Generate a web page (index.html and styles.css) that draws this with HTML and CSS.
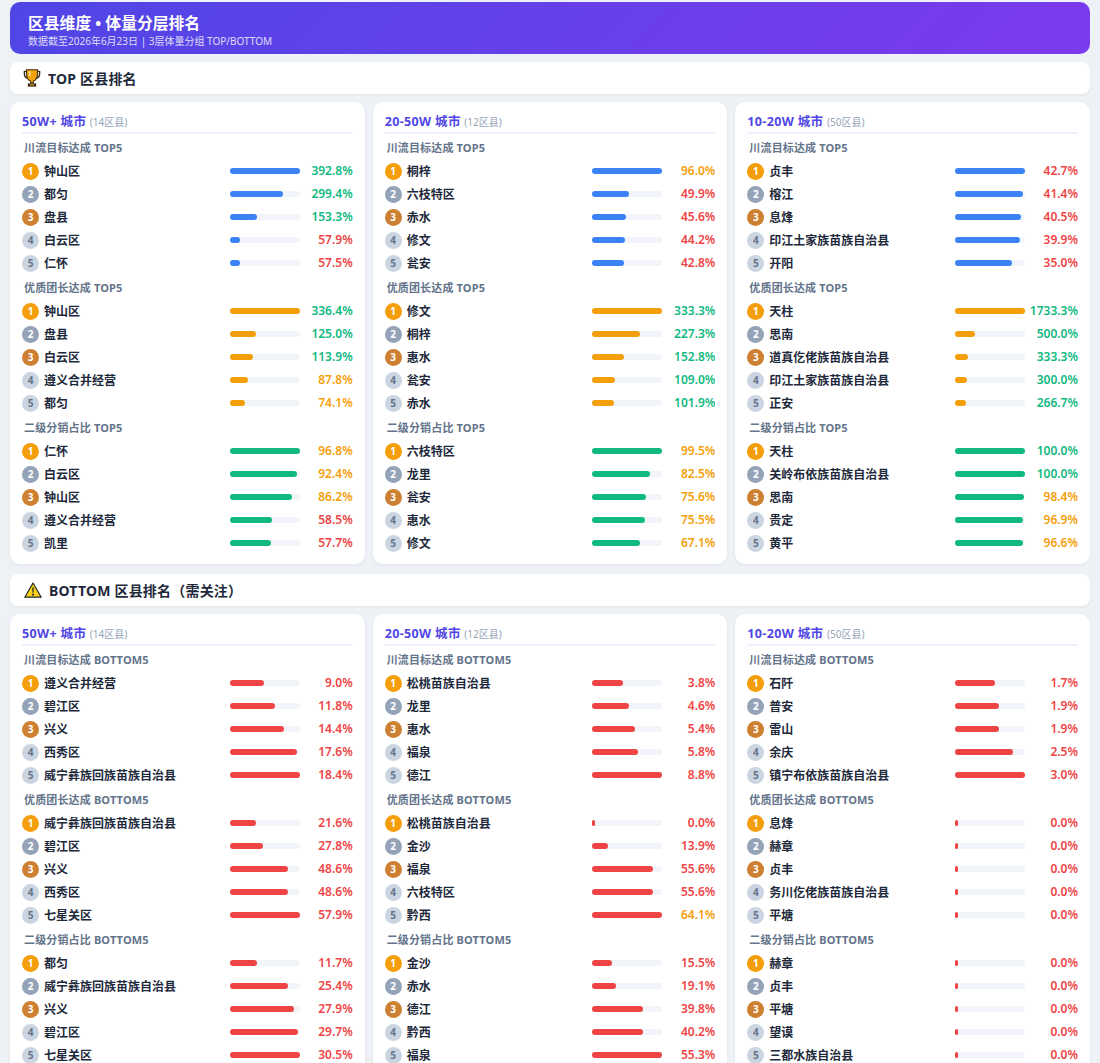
FILE: index.html
```html
<!DOCTYPE html>
<html lang="zh-CN">
<head>
    <meta charset="UTF-8">
    <title>区县维度 • 体量分层排名</title>
    <link rel="stylesheet" href="styles.css">
</head>
<body>
    <header class="banner">
        <h1>区县维度 • 体量分层排名</h1>
        <p>数据截至2026年6月23日 | 3层体量分组 TOP/BOTTOM</p>
    </header>

    <h2 class="section-title">
        <svg class="section-icon" viewBox="0 0 18 19"><path d="M4 2.500H1v2.700c0 2.600 1.700 4.300 4.200 4.500M14 2.500h3v2.700c0 2.600-1.700 4.300-4.200 4.500" fill="none" stroke="#3a2a10" stroke-width="1.500"/><path d="M3.300 .8h11.400v4.700c0 4-2.300 6.500-4.200 7.200v2H7.500v-2C5.600 12 3.300 9.500 3.300 5.500z" fill="#f5a30b" stroke="#3a2a10" stroke-width="1.100"/><path d="M5.600 2.200h1.700v5.300H5.600z" fill="#fde68a"/><path d="M4.600 15.200h8.800V18.600H4.600z" fill="#2b2116"/><path d="M6.500 16.200h5v1.200h-5z" fill="#f5a30b"/></svg>
        TOP 区县排名
    </h2>
    <div class="card-grid">
        <section class="card">
            <h3 class="card-title">50W+ 城市 <small>(14区县)</small></h3>
            <div class="metric">
                <h4>川流目标达成 TOP5</h4>
                <div class="row"><i class="rank r1">1</i><span class="name">钟山区</span><div class="track"><div class="bar blue" style="width:100%"></div></div><b class="val good">392.8%</b></div>
                <div class="row"><i class="rank r2">2</i><span class="name">都匀</span><div class="track"><div class="bar blue" style="width:76.2%"></div></div><b class="val good">299.4%</b></div>
                <div class="row"><i class="rank r3">3</i><span class="name">盘县</span><div class="track"><div class="bar blue" style="width:39%"></div></div><b class="val good">153.3%</b></div>
                <div class="row"><i class="rank">4</i><span class="name">白云区</span><div class="track"><div class="bar blue" style="width:14.7%"></div></div><b class="val bad">57.9%</b></div>
                <div class="row"><i class="rank">5</i><span class="name">仁怀</span><div class="track"><div class="bar blue" style="width:14.6%"></div></div><b class="val bad">57.5%</b></div>
            </div>
            <div class="metric">
                <h4>优质团长达成 TOP5</h4>
                <div class="row"><i class="rank r1">1</i><span class="name">钟山区</span><div class="track"><div class="bar amber" style="width:100%"></div></div><b class="val good">336.4%</b></div>
                <div class="row"><i class="rank r2">2</i><span class="name">盘县</span><div class="track"><div class="bar amber" style="width:37.2%"></div></div><b class="val good">125.0%</b></div>
                <div class="row"><i class="rank r3">3</i><span class="name">白云区</span><div class="track"><div class="bar amber" style="width:33.9%"></div></div><b class="val good">113.9%</b></div>
                <div class="row"><i class="rank">4</i><span class="name">遵义合并经营</span><div class="track"><div class="bar amber" style="width:26.1%"></div></div><b class="val mid">87.8%</b></div>
                <div class="row"><i class="rank">5</i><span class="name">都匀</span><div class="track"><div class="bar amber" style="width:22%"></div></div><b class="val mid">74.1%</b></div>
            </div>
            <div class="metric">
                <h4>二级分销占比 TOP5</h4>
                <div class="row"><i class="rank r1">1</i><span class="name">仁怀</span><div class="track"><div class="bar green" style="width:100%"></div></div><b class="val mid">96.8%</b></div>
                <div class="row"><i class="rank r2">2</i><span class="name">白云区</span><div class="track"><div class="bar green" style="width:95.5%"></div></div><b class="val mid">92.4%</b></div>
                <div class="row"><i class="rank r3">3</i><span class="name">钟山区</span><div class="track"><div class="bar green" style="width:89%"></div></div><b class="val mid">86.2%</b></div>
                <div class="row"><i class="rank">4</i><span class="name">遵义合并经营</span><div class="track"><div class="bar green" style="width:60.4%"></div></div><b class="val bad">58.5%</b></div>
                <div class="row"><i class="rank">5</i><span class="name">凯里</span><div class="track"><div class="bar green" style="width:59.6%"></div></div><b class="val bad">57.7%</b></div>
            </div>
        </section>

        <section class="card">
            <h3 class="card-title">20-50W 城市 <small>(12区县)</small></h3>
            <div class="metric">
                <h4>川流目标达成 TOP5</h4>
                <div class="row"><i class="rank r1">1</i><span class="name">桐梓</span><div class="track"><div class="bar blue" style="width:100%"></div></div><b class="val mid">96.0%</b></div>
                <div class="row"><i class="rank r2">2</i><span class="name">六枝特区</span><div class="track"><div class="bar blue" style="width:52%"></div></div><b class="val bad">49.9%</b></div>
                <div class="row"><i class="rank r3">3</i><span class="name">赤水</span><div class="track"><div class="bar blue" style="width:47.5%"></div></div><b class="val bad">45.6%</b></div>
                <div class="row"><i class="rank">4</i><span class="name">修文</span><div class="track"><div class="bar blue" style="width:46%"></div></div><b class="val bad">44.2%</b></div>
                <div class="row"><i class="rank">5</i><span class="name">瓮安</span><div class="track"><div class="bar blue" style="width:44.6%"></div></div><b class="val bad">42.8%</b></div>
            </div>
            <div class="metric">
                <h4>优质团长达成 TOP5</h4>
                <div class="row"><i class="rank r1">1</i><span class="name">修文</span><div class="track"><div class="bar amber" style="width:100%"></div></div><b class="val good">333.3%</b></div>
                <div class="row"><i class="rank r2">2</i><span class="name">桐梓</span><div class="track"><div class="bar amber" style="width:68.2%"></div></div><b class="val good">227.3%</b></div>
                <div class="row"><i class="rank r3">3</i><span class="name">惠水</span><div class="track"><div class="bar amber" style="width:45.8%"></div></div><b class="val good">152.8%</b></div>
                <div class="row"><i class="rank">4</i><span class="name">瓮安</span><div class="track"><div class="bar amber" style="width:32.7%"></div></div><b class="val good">109.0%</b></div>
                <div class="row"><i class="rank">5</i><span class="name">赤水</span><div class="track"><div class="bar amber" style="width:30.6%"></div></div><b class="val good">101.9%</b></div>
            </div>
            <div class="metric">
                <h4>二级分销占比 TOP5</h4>
                <div class="row"><i class="rank r1">1</i><span class="name">六枝特区</span><div class="track"><div class="bar green" style="width:100%"></div></div><b class="val mid">99.5%</b></div>
                <div class="row"><i class="rank r2">2</i><span class="name">龙里</span><div class="track"><div class="bar green" style="width:82.9%"></div></div><b class="val mid">82.5%</b></div>
                <div class="row"><i class="rank r3">3</i><span class="name">瓮安</span><div class="track"><div class="bar green" style="width:76%"></div></div><b class="val mid">75.6%</b></div>
                <div class="row"><i class="rank">4</i><span class="name">惠水</span><div class="track"><div class="bar green" style="width:75.9%"></div></div><b class="val mid">75.5%</b></div>
                <div class="row"><i class="rank">5</i><span class="name">修文</span><div class="track"><div class="bar green" style="width:67.4%"></div></div><b class="val mid">67.1%</b></div>
            </div>
        </section>

        <section class="card">
            <h3 class="card-title">10-20W 城市 <small>(50区县)</small></h3>
            <div class="metric">
                <h4>川流目标达成 TOP5</h4>
                <div class="row"><i class="rank r1">1</i><span class="name">贞丰</span><div class="track"><div class="bar blue" style="width:100%"></div></div><b class="val bad">42.7%</b></div>
                <div class="row"><i class="rank r2">2</i><span class="name">榕江</span><div class="track"><div class="bar blue" style="width:97%"></div></div><b class="val bad">41.4%</b></div>
                <div class="row"><i class="rank r3">3</i><span class="name">息烽</span><div class="track"><div class="bar blue" style="width:94.8%"></div></div><b class="val bad">40.5%</b></div>
                <div class="row"><i class="rank">4</i><span class="name">印江土家族苗族自治县</span><div class="track"><div class="bar blue" style="width:93.4%"></div></div><b class="val bad">39.9%</b></div>
                <div class="row"><i class="rank">5</i><span class="name">开阳</span><div class="track"><div class="bar blue" style="width:82%"></div></div><b class="val bad">35.0%</b></div>
            </div>
            <div class="metric">
                <h4>优质团长达成 TOP5</h4>
                <div class="row"><i class="rank r1">1</i><span class="name">天柱</span><div class="track"><div class="bar amber" style="width:100%"></div></div><b class="val good">1733.3%</b></div>
                <div class="row"><i class="rank r2">2</i><span class="name">思南</span><div class="track"><div class="bar amber" style="width:28.8%"></div></div><b class="val good">500.0%</b></div>
                <div class="row"><i class="rank r3">3</i><span class="name">道真仡佬族苗族自治县</span><div class="track"><div class="bar amber" style="width:19.2%"></div></div><b class="val good">333.3%</b></div>
                <div class="row"><i class="rank">4</i><span class="name">印江土家族苗族自治县</span><div class="track"><div class="bar amber" style="width:17.3%"></div></div><b class="val good">300.0%</b></div>
                <div class="row"><i class="rank">5</i><span class="name">正安</span><div class="track"><div class="bar amber" style="width:15.4%"></div></div><b class="val good">266.7%</b></div>
            </div>
            <div class="metric">
                <h4>二级分销占比 TOP5</h4>
                <div class="row"><i class="rank r1">1</i><span class="name">天柱</span><div class="track"><div class="bar green" style="width:100%"></div></div><b class="val good">100.0%</b></div>
                <div class="row"><i class="rank r2">2</i><span class="name">关岭布依族苗族自治县</span><div class="track"><div class="bar green" style="width:100%"></div></div><b class="val good">100.0%</b></div>
                <div class="row"><i class="rank r3">3</i><span class="name">思南</span><div class="track"><div class="bar green" style="width:98.4%"></div></div><b class="val mid">98.4%</b></div>
                <div class="row"><i class="rank">4</i><span class="name">贵定</span><div class="track"><div class="bar green" style="width:96.9%"></div></div><b class="val mid">96.9%</b></div>
                <div class="row"><i class="rank">5</i><span class="name">黄平</span><div class="track"><div class="bar green" style="width:96.6%"></div></div><b class="val mid">96.6%</b></div>
            </div>
        </section>
    </div>

    <h2 class="section-title section-bottom">
        <svg class="section-icon warn-icon" viewBox="0 0 18 16"><path d="M9 1l8.200 14.200H.8z" fill="#fcd116" stroke="#1f2933" stroke-width="1.200" stroke-linejoin="round"/><path d="M8.200 5.500h1.600l-.3 5.300h-1z" fill="#1f2933"/><path d="M8.100 11.700h1.800v1.700H8.100z" fill="#1f2933"/></svg>
        BOTTOM 区县排名（需关注）
    </h2>
    <div class="card-grid">
        <section class="card">
            <h3 class="card-title">50W+ 城市 <small>(14区县)</small></h3>
            <div class="metric">
                <h4>川流目标达成 BOTTOM5</h4>
                <div class="row"><i class="rank r1">1</i><span class="name">遵义合并经营</span><div class="track"><div class="bar red" style="width:48.9%"></div></div><b class="val bad">9.0%</b></div>
                <div class="row"><i class="rank r2">2</i><span class="name">碧江区</span><div class="track"><div class="bar red" style="width:64.1%"></div></div><b class="val bad">11.8%</b></div>
                <div class="row"><i class="rank r3">3</i><span class="name">兴义</span><div class="track"><div class="bar red" style="width:78.3%"></div></div><b class="val bad">14.4%</b></div>
                <div class="row"><i class="rank">4</i><span class="name">西秀区</span><div class="track"><div class="bar red" style="width:95.7%"></div></div><b class="val bad">17.6%</b></div>
                <div class="row"><i class="rank">5</i><span class="name">威宁彝族回族苗族自治县</span><div class="track"><div class="bar red" style="width:100%"></div></div><b class="val bad">18.4%</b></div>
            </div>
            <div class="metric">
                <h4>优质团长达成 BOTTOM5</h4>
                <div class="row"><i class="rank r1">1</i><span class="name">威宁彝族回族苗族自治县</span><div class="track"><div class="bar red" style="width:37.3%"></div></div><b class="val bad">21.6%</b></div>
                <div class="row"><i class="rank r2">2</i><span class="name">碧江区</span><div class="track"><div class="bar red" style="width:48%"></div></div><b class="val bad">27.8%</b></div>
                <div class="row"><i class="rank r3">3</i><span class="name">兴义</span><div class="track"><div class="bar red" style="width:83.9%"></div></div><b class="val bad">48.6%</b></div>
                <div class="row"><i class="rank">4</i><span class="name">西秀区</span><div class="track"><div class="bar red" style="width:83.9%"></div></div><b class="val bad">48.6%</b></div>
                <div class="row"><i class="rank">5</i><span class="name">七星关区</span><div class="track"><div class="bar red" style="width:100%"></div></div><b class="val bad">57.9%</b></div>
            </div>
            <div class="metric">
                <h4>二级分销占比 BOTTOM5</h4>
                <div class="row"><i class="rank r1">1</i><span class="name">都匀</span><div class="track"><div class="bar red" style="width:38.4%"></div></div><b class="val bad">11.7%</b></div>
                <div class="row"><i class="rank r2">2</i><span class="name">威宁彝族回族苗族自治县</span><div class="track"><div class="bar red" style="width:83.3%"></div></div><b class="val bad">25.4%</b></div>
                <div class="row"><i class="rank r3">3</i><span class="name">兴义</span><div class="track"><div class="bar red" style="width:91.5%"></div></div><b class="val bad">27.9%</b></div>
                <div class="row"><i class="rank">4</i><span class="name">碧江区</span><div class="track"><div class="bar red" style="width:97.4%"></div></div><b class="val bad">29.7%</b></div>
                <div class="row"><i class="rank">5</i><span class="name">七星关区</span><div class="track"><div class="bar red" style="width:100%"></div></div><b class="val bad">30.5%</b></div>
            </div>
        </section>

        <section class="card">
            <h3 class="card-title">20-50W 城市 <small>(12区县)</small></h3>
            <div class="metric">
                <h4>川流目标达成 BOTTOM5</h4>
                <div class="row"><i class="rank r1">1</i><span class="name">松桃苗族自治县</span><div class="track"><div class="bar red" style="width:43.2%"></div></div><b class="val bad">3.8%</b></div>
                <div class="row"><i class="rank r2">2</i><span class="name">龙里</span><div class="track"><div class="bar red" style="width:52.3%"></div></div><b class="val bad">4.6%</b></div>
                <div class="row"><i class="rank r3">3</i><span class="name">惠水</span><div class="track"><div class="bar red" style="width:61.4%"></div></div><b class="val bad">5.4%</b></div>
                <div class="row"><i class="rank">4</i><span class="name">福泉</span><div class="track"><div class="bar red" style="width:65.9%"></div></div><b class="val bad">5.8%</b></div>
                <div class="row"><i class="rank">5</i><span class="name">德江</span><div class="track"><div class="bar red" style="width:100%"></div></div><b class="val bad">8.8%</b></div>
            </div>
            <div class="metric">
                <h4>优质团长达成 BOTTOM5</h4>
                <div class="row"><i class="rank r1">1</i><span class="name">松桃苗族自治县</span><div class="track"><div class="bar red" style="width:0%"></div></div><b class="val bad">0.0%</b></div>
                <div class="row"><i class="rank r2">2</i><span class="name">金沙</span><div class="track"><div class="bar red" style="width:21.7%"></div></div><b class="val bad">13.9%</b></div>
                <div class="row"><i class="rank r3">3</i><span class="name">福泉</span><div class="track"><div class="bar red" style="width:86.7%"></div></div><b class="val bad">55.6%</b></div>
                <div class="row"><i class="rank">4</i><span class="name">六枝特区</span><div class="track"><div class="bar red" style="width:86.7%"></div></div><b class="val bad">55.6%</b></div>
                <div class="row"><i class="rank">5</i><span class="name">黔西</span><div class="track"><div class="bar red" style="width:100%"></div></div><b class="val mid">64.1%</b></div>
            </div>
            <div class="metric">
                <h4>二级分销占比 BOTTOM5</h4>
                <div class="row"><i class="rank r1">1</i><span class="name">金沙</span><div class="track"><div class="bar red" style="width:28%"></div></div><b class="val bad">15.5%</b></div>
                <div class="row"><i class="rank r2">2</i><span class="name">赤水</span><div class="track"><div class="bar red" style="width:34.5%"></div></div><b class="val bad">19.1%</b></div>
                <div class="row"><i class="rank r3">3</i><span class="name">德江</span><div class="track"><div class="bar red" style="width:72%"></div></div><b class="val bad">39.8%</b></div>
                <div class="row"><i class="rank">4</i><span class="name">黔西</span><div class="track"><div class="bar red" style="width:72.7%"></div></div><b class="val bad">40.2%</b></div>
                <div class="row"><i class="rank">5</i><span class="name">福泉</span><div class="track"><div class="bar red" style="width:100%"></div></div><b class="val bad">55.3%</b></div>
            </div>
        </section>

        <section class="card">
            <h3 class="card-title">10-20W 城市 <small>(50区县)</small></h3>
            <div class="metric">
                <h4>川流目标达成 BOTTOM5</h4>
                <div class="row"><i class="rank r1">1</i><span class="name">石阡</span><div class="track"><div class="bar red" style="width:56.7%"></div></div><b class="val bad">1.7%</b></div>
                <div class="row"><i class="rank r2">2</i><span class="name">普安</span><div class="track"><div class="bar red" style="width:63.3%"></div></div><b class="val bad">1.9%</b></div>
                <div class="row"><i class="rank r3">3</i><span class="name">雷山</span><div class="track"><div class="bar red" style="width:63.3%"></div></div><b class="val bad">1.9%</b></div>
                <div class="row"><i class="rank">4</i><span class="name">余庆</span><div class="track"><div class="bar red" style="width:83.3%"></div></div><b class="val bad">2.5%</b></div>
                <div class="row"><i class="rank">5</i><span class="name">镇宁布依族苗族自治县</span><div class="track"><div class="bar red" style="width:100%"></div></div><b class="val bad">3.0%</b></div>
            </div>
            <div class="metric">
                <h4>优质团长达成 BOTTOM5</h4>
                <div class="row"><i class="rank r1">1</i><span class="name">息烽</span><div class="track"><div class="bar red" style="width:0%"></div></div><b class="val bad">0.0%</b></div>
                <div class="row"><i class="rank r2">2</i><span class="name">赫章</span><div class="track"><div class="bar red" style="width:0%"></div></div><b class="val bad">0.0%</b></div>
                <div class="row"><i class="rank r3">3</i><span class="name">贞丰</span><div class="track"><div class="bar red" style="width:0%"></div></div><b class="val bad">0.0%</b></div>
                <div class="row"><i class="rank">4</i><span class="name">务川仡佬族苗族自治县</span><div class="track"><div class="bar red" style="width:0%"></div></div><b class="val bad">0.0%</b></div>
                <div class="row"><i class="rank">5</i><span class="name">平塘</span><div class="track"><div class="bar red" style="width:0%"></div></div><b class="val bad">0.0%</b></div>
            </div>
            <div class="metric">
                <h4>二级分销占比 BOTTOM5</h4>
                <div class="row"><i class="rank r1">1</i><span class="name">赫章</span><div class="track"><div class="bar red" style="width:0%"></div></div><b class="val bad">0.0%</b></div>
                <div class="row"><i class="rank r2">2</i><span class="name">贞丰</span><div class="track"><div class="bar red" style="width:0%"></div></div><b class="val bad">0.0%</b></div>
                <div class="row"><i class="rank r3">3</i><span class="name">平塘</span><div class="track"><div class="bar red" style="width:0%"></div></div><b class="val bad">0.0%</b></div>
                <div class="row"><i class="rank">4</i><span class="name">望谟</span><div class="track"><div class="bar red" style="width:0%"></div></div><b class="val bad">0.0%</b></div>
                <div class="row"><i class="rank">5</i><span class="name">三都水族自治县</span><div class="track"><div class="bar red" style="width:0%"></div></div><b class="val bad">0.0%</b></div>
            </div>
        </section>
    </div>
</body>
</html>
```
FILE: styles.css
```css
* {
    margin: 0;
    padding: 0;
    box-sizing: border-box;
}

html {
    height: 100%;
    overflow: hidden;
}

body {
    height: 100%;
    overflow: hidden;
    padding: 2px 10px 0;
    background: #eef2f7;
    color: #1e293b;
    font-family: "Noto Sans", "Noto Sans CJK SC", sans-serif;
}

.banner {
    height: 52px;
    padding: 11px 18px 0;
    margin-bottom: 8px;
    border-radius: 10px;
    color: #fff;
    background: linear-gradient(135deg, #4f46e5, #7c3aed);
}

.banner h1 {
    font-size: 15.8px;
    line-height: 20px;
    font-weight: 700;
}

.banner p {
    margin-top: 1px;
    font-size: 10px;
    line-height: 15px;
    opacity: 0.8;
}

.section-title {
    display: flex;
    align-items: center;
    gap: 7px;
    height: 32px;
    padding-left: 13px;
    margin-bottom: 8px;
    border-radius: 8px;
    background: #fff;
    font-size: 14px;
    font-weight: 700;
    letter-spacing: 0.2px;
    box-shadow: 0 1px 3px rgba(0, 0, 0, 0.06);
}

.section-bottom {
    margin-top: 10px;
    padding-left: 14px;
}

.section-icon {
    width: 18px;
    height: 18px;
}

.warn-icon {
    height: 16px;
}

.card-grid {
    display: grid;
    grid-template-columns: repeat(3, 1fr);
    gap: 8px;
}

.card {
    padding: 10px 12px 12px;
    border-radius: 10px;
    background: #fff;
    box-shadow: 0 1px 4px rgba(0, 0, 0, 0.06);
}

.card-title {
    height: 22px;
    margin-bottom: 6px;
    border-bottom: 2px solid #eef2ff;
    color: #4f46e5;
    font-size: 12.5px;
    line-height: 19px;
    font-weight: 700;
    letter-spacing: 0.35px;
}

.card-title small {
    color: #94a3b8;
    font-size: 10px;
    font-weight: 400;
    letter-spacing: 0;
}

.metric {
    margin-bottom: 8px;
}

.metric:last-child {
    margin-bottom: 0;
}

.metric h4 {
    padding-left: 2px;
    margin-bottom: 6px;
    color: #64748b;
    font-size: 11px;
    line-height: 16px;
    font-weight: 700;
    letter-spacing: 0.15px;
}

.row {
    display: flex;
    align-items: center;
    height: 18px;
    margin-bottom: 5px;
}

.row:last-child {
    margin-bottom: 0;
}

.rank {
    flex: none;
    width: 17px;
    height: 17px;
    margin-right: 5px;
    border-radius: 50%;
    background: #cbd5e1;
    color: #64748b;
    font-size: 10px;
    font-style: normal;
    font-weight: 700;
    line-height: 17px;
    text-align: center;
}

.r1 { background: #f59e0b; color: #fff; }
.r2 { background: #94a3b8; color: #fff; }
.r3 { background: #cd7f32; color: #fff; }

.name {
    flex: 1;
    padding-top: 2px;
    font-size: 12px;
    line-height: 18px;
    font-weight: 700;
    white-space: nowrap;
}

.track {
    flex: none;
    width: 70px;
    height: 6px;
    border-radius: 3px;
    background: #f1f5f9;
}

.bar {
    min-width: 3px;
    height: 100%;
    border-radius: 3px;
}

.blue { background: #3b82f6; }
.amber { background: #f59e0b; }
.green { background: #10b981; }
.red { background: #ef4444; }

.val {
    flex: none;
    width: 53px;
    font-size: 12px;
    line-height: 17px;
    margin-bottom: 1px;
    font-weight: 600;
    text-align: right;
}

.good { color: #10b981; }
.mid { color: #f59e0b; }
.bad { color: #ef4444; }
```
